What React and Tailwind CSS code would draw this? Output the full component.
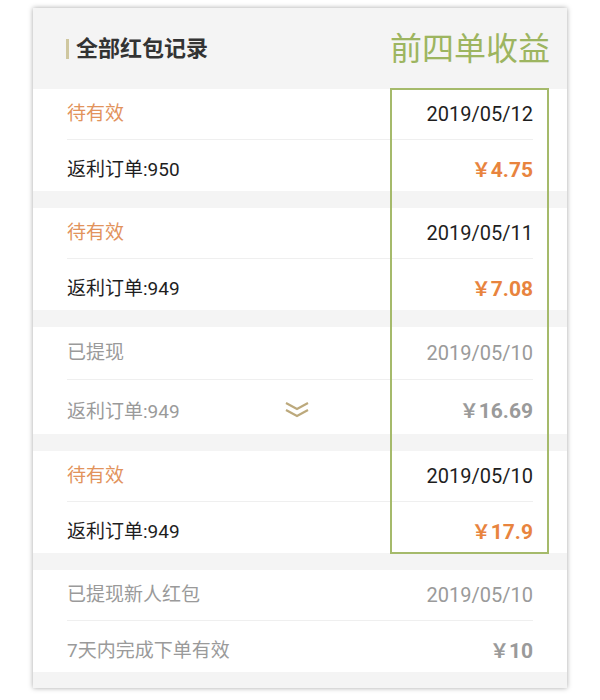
import React from "react";

const records = [
  { status: "待有效", tone: "pending", date: "2019/05/12", label: "返利订单:950", amount: "4.75" },
  { status: "待有效", tone: "pending", date: "2019/05/11", label: "返利订单:949", amount: "7.08" },
  { status: "已提现", tone: "done", date: "2019/05/10", label: "返利订单:949", amount: "16.69", expand: true },
  { status: "待有效", tone: "pending", date: "2019/05/10", label: "返利订单:949", amount: "17.9" },
  { status: "已提现新人红包", tone: "done", date: "2019/05/10", label: "7天内完成下单有效", amount: "10" },
];

const DoubleChevron = () => (
  <svg width="28" height="18" viewBox="0 0 28 18" fill="none" stroke="#bca97c" strokeWidth="2.2">
    <path d="M3 2 L14 8 L25 2" />
    <path d="M3 9 L14 15 L25 9" />
  </svg>
);

const RecordCard = ({ item }) => {
  const done = item.tone === "done";
  return (
    <div className="bg-white px-[34px]">
      <div
        className={`flex items-center justify-between border-b border-[#efefef] ${
          item.expand ? "h-[53px]" : "h-[51px]"
        }`}
      >
        <span className={done ? "text-[#9a9a9a]" : "text-[#e2935c]"}>{item.status}</span>
        <span
          className={`font-['Roboto',sans-serif] text-[20px] ${
            done ? "text-[#9a9a9a]" : "text-[#1e1e1e]"
          }`}
        >
          {item.date}
        </span>
      </div>
      <div
        className={`relative flex items-center justify-between pt-[10px] ${
          item.expand ? "h-[54px]" : "h-[51px]"
        }`}
      >
        <span className={done ? "text-[#9a9a9a]" : "text-[#1e1e1e]"}>{item.label}</span>
        {item.expand && (
          <span className="absolute left-[216px] top-[21px]">
            <DoubleChevron />
          </span>
        )}
        <span
          className={`flex items-baseline font-bold ${done ? "text-[#9a9a9a]" : "text-[#e8843e]"}`}
        >
          <span className="font-['Noto_Sans_CJK_SC',sans-serif] text-[19px]">￥</span>
          <span className="font-['Roboto',sans-serif] text-[21px]">{item.amount}</span>
        </span>
      </div>
    </div>
  );
};

export default function App() {
  return (
    <div className="w-[600px] h-[700px] bg-white pt-[8px] font-['Roboto','Noto_Sans_CJK_SC',sans-serif] text-[19px]">
      <div className="relative ml-[33px] w-[534px] bg-[#f4f4f4] pb-[16px] shadow-[0_0_5px_rgba(0,0,0,0.35)]">
        {/* header */}
        <div className="flex h-[81px] items-center justify-between pl-[33px] pr-[17px]">
          <div className="flex items-center">
            <span className="mr-[7px] h-[20px] w-[3px] bg-[#cfc79f]" />
            <span className="text-[22px] font-bold text-[#333333]">全部红包记录</span>
          </div>
          <span className="-mt-[6px] text-[32px] text-[#9db560] font-['Noto_Sans_CJK_SC',sans-serif]">
            前四单收益
          </span>
        </div>

        <div className="flex flex-col gap-[17px]">
          {records.map((r, i) => (
            <RecordCard key={i} item={r} />
          ))}
        </div>

        {/* highlight box */}
        <div className="absolute left-[357px] top-[80px] h-[466px] w-[159px] border-2 border-[#a5ba6b]" />
      </div>
    </div>
  );
}
